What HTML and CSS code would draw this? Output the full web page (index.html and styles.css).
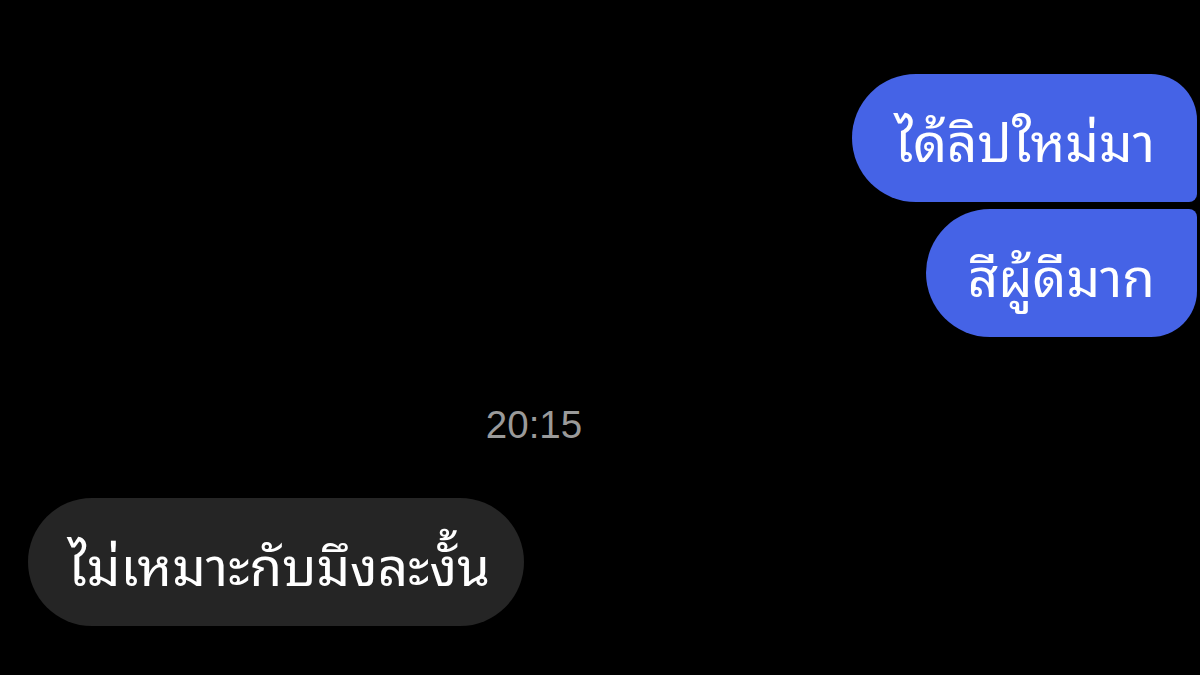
FILE: index.html
```html
<!DOCTYPE html>
<html lang="th">
<head>
<meta charset="utf-8">
<link rel="stylesheet" href="styles.css">
</head>
<body>
<div class="chat">
  <div class="group out">
    <div class="bubble blue first">ได้ลิปใหม่มา</div>
    <div class="bubble blue last">สีผู้ดีมาก</div>
  </div>
  <div class="time">20:15</div>
  <div class="group in">
    <div class="bubble gray">ไม่เหมาะกับมึงละงั้น</div>
  </div>
</div>
</body>
</html>
```
FILE: styles.css
```css
html, body {
  margin: 0;
  padding: 0;
  background: #000;
  height: 100%;
}
.chat {
  display: flex;
  flex-direction: column;
  padding: 74px 3px 0 28px;
  font-family: "Noto Sans Thai Looped", "Noto Serif Thai", "Loma", "Garuda", "Norasi", serif;
}
.group {
  display: flex;
  flex-direction: column;
  gap: 7px;
}
.out { align-items: flex-end; }
.in { align-items: flex-start; }
.bubble {
  box-sizing: border-box;
  height: 128px;
  display: flex;
  align-items: center;
  padding: 0 42px 0 42px;
  color: #fff;
  font-size: 53px;
  white-space: nowrap;
}
.blue { background: #4563e6; }
.first { border-radius: 64px 46px 8px 64px; }
.last { border-radius: 64px 8px 46px 64px; }
.gray {
  background: #252525;
  border-radius: 64px;
  padding: 0 34px 0 40px;
}
.time {
  align-self: center;
  margin: 66px 157px 51px 0;
  color: #9a9a9a;
  font-size: 38.5px;
  line-height: 44px;
  font-family: "Liberation Sans", Arial, sans-serif;
}
```
